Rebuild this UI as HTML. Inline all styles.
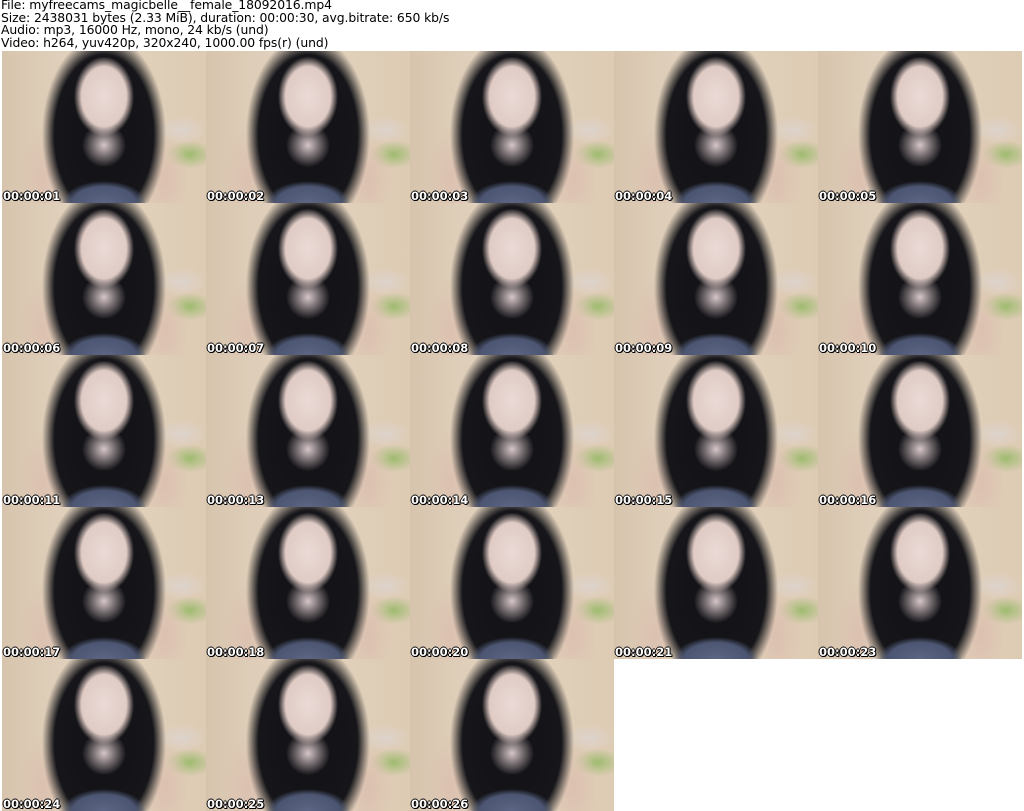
<!DOCTYPE html>
<html><head><meta charset="utf-8"><style>
body{margin:0;width:1024px;height:811px;background:#fff;position:relative;overflow:hidden;font-family:"DejaVu Sans","Liberation Sans",sans-serif}
.hd{position:absolute;left:1px;top:-1px;font-size:12.4px;line-height:12.6px;color:#000;letter-spacing:-0.1px;white-space:pre}
.t{position:absolute;width:204px;height:152px;overflow:hidden;
background:
radial-gradient(ellipse 30px 40px at 50% 30%,#eadad6 0,#e0cbc5 75%,rgba(0,0,0,0) 100%),
radial-gradient(ellipse 22px 22px at 50% 62%,#d6c6c8 0,rgba(214,198,200,0) 100%),
radial-gradient(ellipse 42px 22px at 50% 100%,#5c6684 0,#4c5672 75%,rgba(0,0,0,0) 100%),
radial-gradient(ellipse 62px 100px at 50% 55%,#121216 0,#16161a 80%,rgba(0,0,0,0) 100%),
radial-gradient(ellipse 24px 50px at 20% 85%,#dcc0b0 0,rgba(0,0,0,0) 100%),
radial-gradient(ellipse 24px 50px at 80% 85%,#dcc0b0 0,rgba(0,0,0,0) 100%),
radial-gradient(ellipse 26px 14px at 88% 52%,#ddd3cc 0,rgba(0,0,0,0) 100%),
radial-gradient(ellipse 24px 14px at 92% 68%,#9fbb70 0,rgba(0,0,0,0) 100%),
linear-gradient(90deg,#d7c4ad,#e3d4c0 40%,#ddcbb3);}
.t span{position:absolute;left:1px;bottom:0px;font-weight:bold;font-size:11.5px;color:#fff;text-shadow:-1px 0 #000,1px 0 #000,0 -1px #000,0 1px #000,1px 1px #000}
</style></head><body>
<div class="hd">File: myfreecams_magicbelle__female_18092016.mp4
Size: 2438031 bytes (2.33 MiB), duration: 00:00:30, avg.bitrate: 650 kb/s
Audio: mp3, 16000 Hz, mono, 24 kb/s (und)
Video: h264, yuv420p, 320x240, 1000.00 fps(r) (und)</div>
<div class="t" style="left:2px;top:51px"><span>00:00:01</span></div>
<div class="t" style="left:206px;top:51px"><span>00:00:02</span></div>
<div class="t" style="left:410px;top:51px"><span>00:00:03</span></div>
<div class="t" style="left:614px;top:51px"><span>00:00:04</span></div>
<div class="t" style="left:818px;top:51px"><span>00:00:05</span></div>
<div class="t" style="left:2px;top:203px"><span>00:00:06</span></div>
<div class="t" style="left:206px;top:203px"><span>00:00:07</span></div>
<div class="t" style="left:410px;top:203px"><span>00:00:08</span></div>
<div class="t" style="left:614px;top:203px"><span>00:00:09</span></div>
<div class="t" style="left:818px;top:203px"><span>00:00:10</span></div>
<div class="t" style="left:2px;top:355px"><span>00:00:11</span></div>
<div class="t" style="left:206px;top:355px"><span>00:00:13</span></div>
<div class="t" style="left:410px;top:355px"><span>00:00:14</span></div>
<div class="t" style="left:614px;top:355px"><span>00:00:15</span></div>
<div class="t" style="left:818px;top:355px"><span>00:00:16</span></div>
<div class="t" style="left:2px;top:507px"><span>00:00:17</span></div>
<div class="t" style="left:206px;top:507px"><span>00:00:18</span></div>
<div class="t" style="left:410px;top:507px"><span>00:00:20</span></div>
<div class="t" style="left:614px;top:507px"><span>00:00:21</span></div>
<div class="t" style="left:818px;top:507px"><span>00:00:23</span></div>
<div class="t" style="left:2px;top:659px"><span>00:00:24</span></div>
<div class="t" style="left:206px;top:659px"><span>00:00:25</span></div>
<div class="t" style="left:410px;top:659px"><span>00:00:26</span></div>
</body></html>
